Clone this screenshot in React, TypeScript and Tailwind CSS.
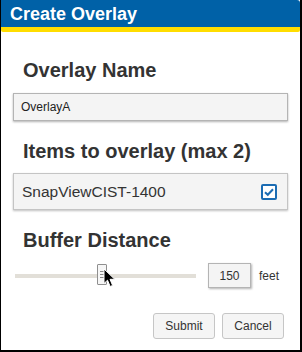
import React from 'react'

function Cursor() {
  return (
    <svg className="absolute left-[88px] top-[5px]" width="13" height="20" viewBox="0 0 13 20">
      <path d="M1 1 L1 15.5 L4.5 12.2 L7.2 18.5 L9.6 17.4 L7 11.3 L11.8 11.3 Z" fill="#000" stroke="#fff" strokeWidth="1" strokeLinejoin="round" />
    </svg>
  )
}

export default function App() {
  return (
    <div className="w-[302px] h-[352px] bg-white border-l border-r-2 border-b-2 border-black flex flex-col font-['Liberation_Sans',Arial,sans-serif] text-[#333]">
      <div className="h-[27px] bg-[#0061a7] rounded-tr-[3px] pl-[9px] pt-px text-white font-bold text-[18px] leading-[27px]">
        Create Overlay
      </div>
      <div className="h-[5px] bg-[#ffdd00] rounded-b-[2px]" />

      <div className="flex flex-col pl-[12px]">
        <h2 className="mt-[26px] ml-[10px] text-[20px] leading-[24px] font-bold">Overlay Name</h2>
        <div className="mt-[11px] w-[275px] h-[28px] bg-[#f4f4f4] border border-[#b4b4b4] shadow-[0_1px_2px_rgba(0,0,0,0.3)] flex items-center pl-[7px] text-[12px] text-[#222]">
          OverlayA
        </div>

        <h2 className="mt-[18px] ml-[10px] text-[20px] leading-[24px] font-bold">Items to overlay (max 2)</h2>
        <div className="mt-[10px] w-[275px] h-[37px] bg-[#f4f4f4] border border-[#c4c4c4] shadow-[0_1px_2px_rgba(0,0,0,0.25)] flex items-center justify-between pl-[8px] pr-[10px]">
          <span className="text-[15.5px] text-[#333]">SnapViewCIST-1400</span>
          <svg width="16" height="16" viewBox="0 0 16 16">
            <rect x="1" y="1" width="14" height="14" rx="1" fill="#fff" stroke="#1b6cb3" strokeWidth="2" />
            <path d="M4 8.2 L6.8 10.8 L12 5.2" fill="none" stroke="#1b6cb3" strokeWidth="2" />
          </svg>
        </div>

        <h2 className="mt-[18px] ml-[10px] text-[20px] leading-[24px] font-bold">Buffer Distance</h2>
        <div className="mt-[11px] h-[25px] flex items-center">
          <div className="relative ml-[2px] w-[181px] h-[25px] flex items-center">
            <div className="w-full h-[4px] bg-[#e2dfd8]" />
            <div className="absolute left-[82px] top-[1px] w-[10px] h-[21px] bg-[#f6f6f6] border border-[#8f8f8f] rounded-[1px] flex flex-col items-center justify-center gap-[2px]">
              <div className="w-[4px] h-px bg-[#888]" />
              <div className="w-[4px] h-px bg-[#888]" />
              <div className="w-[4px] h-px bg-[#888]" />
            </div>
            <Cursor />
          </div>
          <div className="ml-[12px] w-[43px] h-[25px] bg-[#f4f4f4] border border-[#b4b4b4] shadow-[1px_1px_2px_rgba(0,0,0,0.3)] flex items-center justify-center text-[12px] text-[#333]">
            150
          </div>
          <span className="ml-[8px] text-[12px] text-[#333]">feet</span>
        </div>

        <div className="mt-[25px] w-[271px] flex justify-end gap-[7px]">
          <button className="w-[62px] h-[26px] bg-[#f5f5f5] border border-[#c6c6c6] rounded-[3px] text-[12px] text-[#333]">Submit</button>
          <button className="w-[62px] h-[26px] bg-[#f5f5f5] border border-[#c6c6c6] rounded-[3px] text-[12px] text-[#333]">Cancel</button>
        </div>
      </div>
    </div>
  )
}
